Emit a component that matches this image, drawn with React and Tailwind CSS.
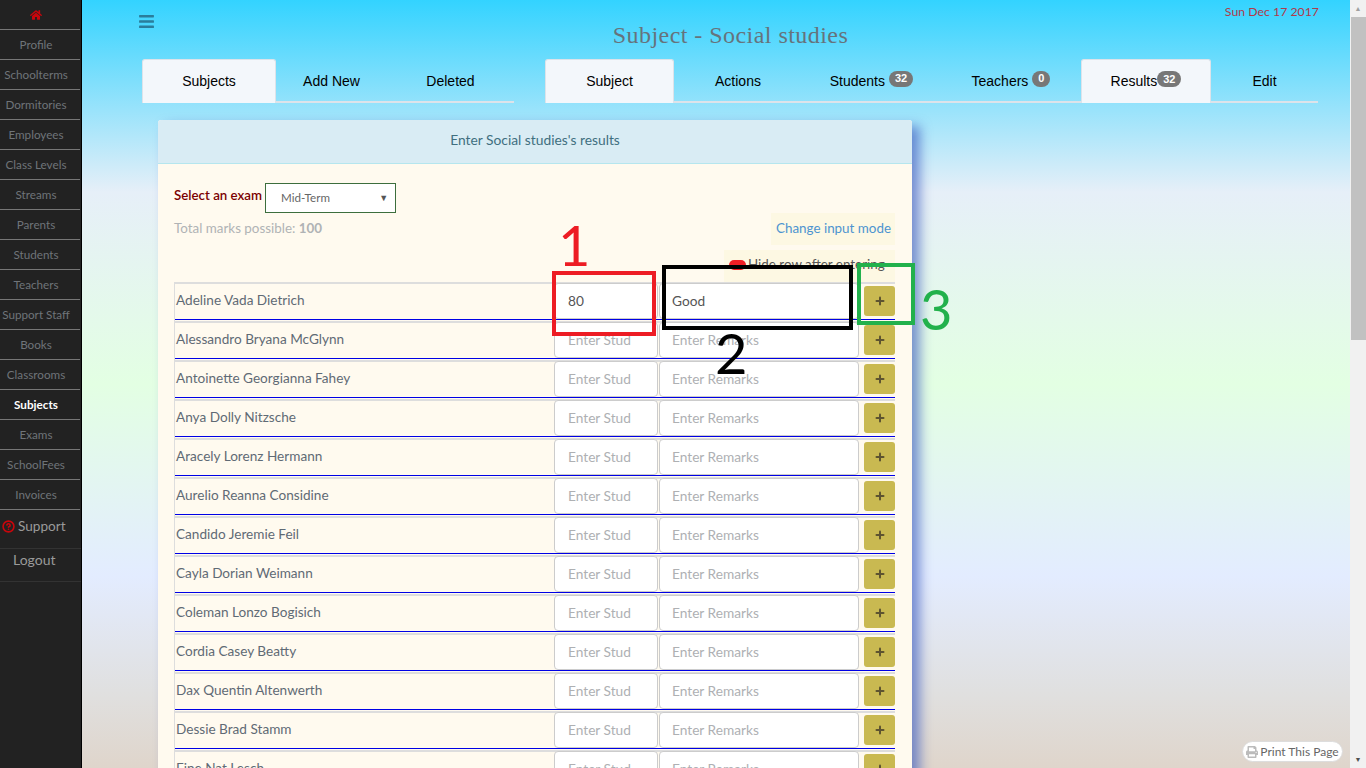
import React from 'react'
import { Plus, HelpCircle } from 'lucide-react'
import { FaBars, FaHome, FaPrint } from 'react-icons/fa'

const navItems = ['Profile', 'Schoolterms', 'Dormitories', 'Employees', 'Class Levels', 'Streams', 'Parents', 'Students', 'Teachers', 'Support Staff', 'Books', 'Classrooms', 'Subjects', 'Exams', 'SchoolFees', 'Invoices']

const students = ['Adeline Vada Dietrich', 'Alessandro Bryana McGlynn', 'Antoinette Georgianna Fahey', 'Anya Dolly Nitzsche', 'Aracely Lorenz Hermann', 'Aurelio Reanna Considine', 'Candido Jeremie Feil', 'Cayla Dorian Weimann', 'Coleman Lonzo Bogisich', 'Cordia Casey Beatty', 'Dax Quentin Altenwerth', 'Dessie Brad Stamm', 'Fine Nat Lesch']

function Sidebar() {
  return (
    <aside className="w-[82px] shrink-0 h-[768px] bg-[#222222] border-r border-black font-['Lato',sans-serif]">
      <div className="h-[30px] mr-[1px] border-b border-[#777] flex items-center justify-center pr-[8px]">
        <FaHome size={12} className="text-[#c8060c]" />
      </div>
      {navItems.map((item) => (
        <div key={item} className={`h-[30px] mr-[1px] border-b border-[#777] flex items-center justify-center pr-[8px] text-[11.7px] whitespace-nowrap ${item === 'Subjects' ? 'text-white font-bold' : 'text-[#6f7479]'}`}>
          {item}
        </div>
      ))}
      <div className="h-[39px] border-b border-[#333] flex items-center pb-[5px] pl-[2px] text-[13.6px] text-[#9a9a9a]">
        <HelpCircle size={13} strokeWidth={3} className="text-[#c8060c] mr-[3px]" />
        <span>Support</span>
      </div>
      <div className="h-[33px] border-b border-[#333] text-[14px] text-[#9a9a9a] pl-[13px]">Logout</div>
    </aside>
  )
}

function Tab({ label, badge, active, width, tight }) {
  return (
    <div className={`h-[44px] flex items-center justify-center text-[14px] text-black font-['Liberation_Sans',sans-serif] ${width} ${active ? 'bg-[#f3f7fb] border border-b-0 border-[#dde3ea] rounded-t-[3px]' : ''}`}>
      <span>{label}</span>
      {badge && (
        <span className={`h-[16px] px-[6px] -mt-[5px] rounded-full bg-[#777777] text-white text-[11px] font-bold flex items-center ${tight ? '' : 'ml-[4px]'}`}>{badge}</span>
      )}
    </div>
  )
}

function StudentRow({ name, score, remark }) {
  return (
    <div className="h-[39px] flex shrink-0 border-l border-t-2 border-[#dddddd] relative">
      <div className="w-[379px] pt-[6px] pl-[1px] text-[13.6px] leading-[20px] text-[#5f6a75]">{name}</div>
      <input readOnly value={score} placeholder="Enter Stud" className="w-[104px] h-[36px] px-[13px] pb-[2px] mt-[-1px] bg-white border border-[#cccccc] rounded-[4px] text-[13.7px] text-[#555] placeholder:text-[#aeb0b3] outline-none" />
      <input readOnly value={remark} placeholder="Enter Remarks" className="w-[200px] h-[36px] ml-[1px] px-[12px] pb-[2px] mt-[-1px] bg-white border border-[#cccccc] rounded-[4px] text-[13.7px] text-[#555] placeholder:text-[#aeb0b3] outline-none" />
      <div className="w-[31px] h-[30px] ml-[5px] mt-[2px] bg-[#c9b951] rounded-[3px] flex items-center justify-center">
        <Plus size={12} strokeWidth={4} className="text-[#5d5330]" />
      </div>
      <div className="absolute left-0 right-0 bottom-[1px] h-[1px] bg-[#0000e6]"></div>
    </div>
  )
}

function ResultsCard() {
  return (
    <div className="w-[754px] ml-[16px] mt-[17px] h-[700px] overflow-hidden rounded-t-[3px] bg-[#fffaef] shadow-[8px_6px_12px_rgba(60,90,190,0.65)] font-['Lato',sans-serif]">
      <div className="h-[44px] pb-[2px] bg-[#d9ecf4] border-b border-[#b5e6ee] flex items-center justify-center text-[13.8px] text-[#3f6f80]">Enter Social studies's results</div>
      <div className="pl-[16px] pr-[17px]">
        <div className="flex pt-[19px] h-[50px]">
          <span className="text-[13.3px] leading-[24px] text-[#7b0000] font-semibold">Select an exam</span>
          <div className="w-[131px] h-[30px] ml-[3px] bg-white border border-[#3d6e3d] flex items-center justify-between pl-[15px] pr-[7px] text-[11.6px] text-[#666]">
            <span>Mid-Term</span>
            <span className="text-[9px] text-[#555]">▼</span>
          </div>
        </div>
        <div className="flex justify-between items-center h-[32px] -mt-[1px]">
          <span className="pb-[2px] text-[13.4px] text-[#b0b3b5]">Total marks possible: <b>100</b></span>
          <span className="h-[32px] pl-[5px] pr-[4px] pb-[2px] bg-[#fdf8e3] flex items-center text-[13.4px] text-[#4d94d0]">Change input mode</span>
        </div>
        <div className="flex justify-end h-[32px] mt-[5px]">
          <div className="w-[171px] h-[32px] bg-[#fdf8e3] pt-[5px] pl-[5px] flex gap-[2px] text-[13.4px] leading-[18px] text-[#555] overflow-hidden whitespace-nowrap">
            <span className="w-[17px] h-[10px] mt-[5px] rounded-full bg-[#f01f25]"></span>
            <span>Hide row after entering</span>
          </div>
        </div>
        <div className="flex flex-col">
          {students.map((name, index) => (
            <StudentRow key={name} name={name} score={index === 0 ? '80' : ''} remark={index === 0 ? 'Good' : ''} />
          ))}
        </div>
      </div>
    </div>
  )
}

export default function App() {
  return (
    <div className="relative flex w-[1366px] h-[768px] overflow-hidden bg-[linear-gradient(180deg,#33d3ff_0%,#e6eff8_25%,#e3ffe3_50%,#e3ecff_75%,#e0e0e0_90%,#dfd5cb_100%)]">
      <Sidebar />

      <main className="w-[1268px] h-[768px] pl-[60px] pr-[32px]">
        <div className="relative h-[59px]">
          <FaBars size={17} className="absolute left-[-4px] top-[13px] text-[#2a7d9c]" />
          <div className="absolute right-[-1px] top-[3px] text-[12.3px] text-[#b03a4a] font-['Lato',sans-serif]">Sun Dec 17 2017</div>
          <h1 className="pt-[20px] pl-[1px] text-center text-[24px] leading-[30px] text-[#66737c] font-['Liberation_Serif',serif] tracking-[0.45px]">Subject - Social studies</h1>
        </div>

        <div className="flex">
          <div className="flex w-[373px] h-[44px] border-b-2 border-[#dde3ea]">
            <Tab label="Subjects" active width="w-[134px]" />
            <Tab label="Add New" width="w-[111px]" />
            <Tab label="Deleted" width="w-[127px]" />
          </div>
          <div className="flex w-[773px] h-[44px] ml-[31px] border-b-2 border-[#dde3ea]">
            <Tab label="Subject" active width="w-[129px]" />
            <Tab label="Actions" width="w-[128px]" />
            <Tab label="Students" badge="32" width="w-[139px]" />
            <Tab label="Teachers" badge="0" width="w-[140px]" />
            <Tab label="Results" badge="32" active tight width="w-[130px]" />
            <Tab label="Edit" width="w-[107px]" />
          </div>
        </div>

        <ResultsCard />
      </main>

      {/* scrollbar */}
      <div className="w-[16px] h-[768px] bg-[#f1f1f1] flex flex-col items-center">
        <div className="h-[17px] text-[7px] leading-[17px] text-[#a0a0a0]">▲</div>
        <div className="w-[15px] h-[323px] bg-[#c1c1c1]"></div>
        <div className="mt-auto h-[17px] text-[7px] leading-[17px] text-[#505050]">▼</div>
      </div>

      <div className="absolute left-[1242px] top-[741px] w-[101px] h-[21px] rounded-full bg-white border border-[#dddddd] flex items-center justify-center gap-[2px] text-[12px] text-[#666] font-['Lato',sans-serif]">
        <FaPrint size={12} className="text-[#bbb]" />
        <span>Print This Page</span>
      </div>

      {/* annotations drawn over the screenshot */}
      <div className="absolute z-20 left-[552px] top-[271px] w-[104px] h-[65px] border-[4px] border-[#ed1c24]"></div>
      <div className="absolute z-20 left-[662px] top-[265px] w-[191px] h-[65px] border-[4px] border-black"></div>
      <div className="absolute z-20 left-[857px] top-[263px] w-[58px] h-[62px] border-[4px] border-[#22b14c]"></div>
      <div className="absolute z-20 left-[558px] top-[210px] text-[56px] leading-[70px] text-[#ed1c24] font-['Lato',sans-serif]">1</div>
      <div className="absolute z-20 left-[715px] top-[318px] text-[56px] leading-[70px] text-black font-['Lato',sans-serif]">2</div>
      <div className="absolute z-20 left-[920px] top-[274px] text-[56px] leading-[70px] text-[#22b14c] font-['Lato',sans-serif]">3</div>
    </div>
  )
}
